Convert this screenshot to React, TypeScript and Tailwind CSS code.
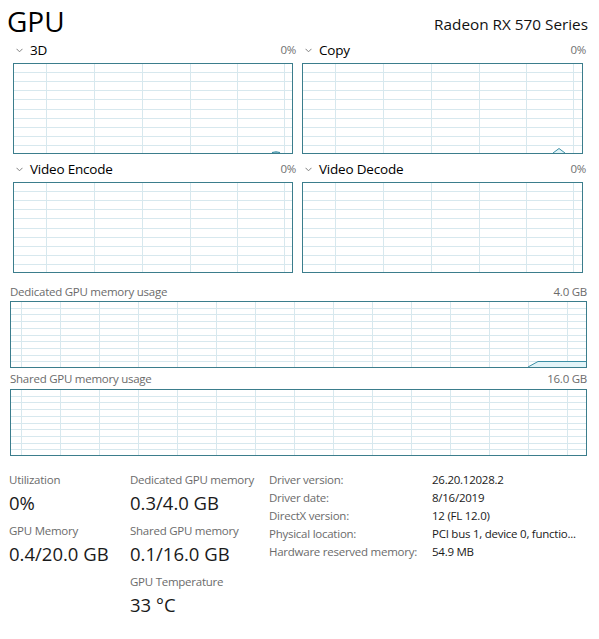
import React from 'react';

const FONT = { fontFamily: '"Open Sans", "Noto Sans", sans-serif' };

type GraphProps = {
  width: number;
  height: number;
  vLines: number[];
  rows: number;
  children?: React.ReactNode;
};

function Graph({ width, height, vLines, rows, children }: GraphProps) {
  const hLines = Array.from({ length: rows - 1 }, (_, i) => ((i + 1) * height) / rows);
  return (
    <div className="border border-[#3b7d8c] bg-white" style={{ width, height }}>
      <svg width={width - 2} height={height - 2} className="block">
        {hLines.map((y) => (
          <line key={'h' + y} x1={0} x2={width} y1={Math.round(y) - 0.5} y2={Math.round(y) - 0.5} stroke="#d7e8ee" strokeWidth={1} />
        ))}
        {vLines.map((x) => (
          <line key={'v' + x} x1={x - 0.5} x2={x - 0.5} y1={0} y2={height} stroke="#d7e8ee" strokeWidth={1} />
        ))}
        {children}
      </svg>
    </div>
  );
}

function Chevron() {
  return (
    <svg width="7" height="5" viewBox="0 0 7 5" className="ml-[1px] mr-[7px] mt-[1px]">
      <path d="M0.5 0.8 L3.5 3.8 L6.5 0.8" fill="none" stroke="#808080" strokeWidth="1" />
    </svg>
  );
}

function EngineGraph({ title, width, children }: { title: string; width: number; children?: React.ReactNode }) {
  return (
    <div style={{ width }}>
      <div className="flex items-center justify-between h-[20px] pl-[2px] -mr-[3px]">
        <div className="flex items-center text-[13.5px] tracking-[-0.2px] text-black">
          <Chevron />
          <span>{title}</span>
        </div>
        <span className="text-[11.5px] tracking-[-0.3px] text-[#707070]">0%</span>
      </div>
      <div className="mt-[3px]">
        <Graph width={width} height={91} vLines={[33, 81, 129, 177, 224, 271]} rows={10}>
          {children}
        </Graph>
      </div>
    </div>
  );
}

const memLines = [11, 50, 89, 128, 167, 206, 245, 284, 323, 362, 401, 440, 479, 518, 557];

function Stat({ label, value }: { label: string; value: string }) {
  return (
    <div className="mb-[5px]">
      <div className="h-[18px] leading-[18px] text-[11.5px] tracking-[-0.25px] text-[#6b6b6b]">{label}</div>
      <div className="h-[28px] leading-[28px] text-[18.5px] text-[#1a1a1a]">{value}</div>
    </div>
  );
}

export default function App() {
  const details: [string, string][] = [
    ['Driver version:', '26.20.12028.2'],
    ['Driver date:', '8/16/2019'],
    ['DirectX version:', '12 (FL 12.0)'],
    ['Physical location:', 'PCI bus 1, device 0, functio...'],
    ['Hardware reserved memory:', '54.9 MB'],
  ];

  return (
    <div className="w-[599px] h-[639px] bg-white overflow-hidden" style={FONT}>
      <div className="flex items-end justify-between h-[38px] pl-[7px] pr-[11px]">
        <span className="text-[28px] leading-[34px] text-black">GPU</span>
        <span className="text-[15.3px] leading-[24px] text-[#111] mb-[2px]">Radeon RX 570 Series</span>
      </div>

      <div className="grid grid-cols-[280px_281px] gap-x-[9px] gap-y-[5px] pl-[13px] mt-[2px]">
        <EngineGraph title="3D" width={280}>
          <path d="M258 88.5 L262 87.8 L266 88.5" fill="none" stroke="#3b8fa5" strokeWidth="1.2" />
        </EngineGraph>
        <EngineGraph title="Copy" width={281}>
          <path d="M250 89 L256 84.5 L262 89" fill="#e2f4f8" stroke="#3b8fa5" strokeWidth="1" />
        </EngineGraph>
        <EngineGraph title="Video Encode" width={280} />
        <EngineGraph title="Video Decode" width={281} />
      </div>

      <div className="pl-[10px] w-[587px] mt-[10px] text-[11.5px] tracking-[-0.25px] text-[#6b6b6b]">
        <div className="flex justify-between h-[18px] leading-[18px]">
          <span>Dedicated GPU memory usage</span>
          <span>4.0 GB</span>
        </div>
        <Graph width={577} height={67} vLines={memLines} rows={10}>
          <path d="M517 65 L527 59.5 L575 59.5 L575 65 Z" fill="#e2f4f8" stroke="none" />
          <path d="M517 65 L527 59.5 L575 59.5" fill="none" stroke="#3b8fa5" strokeWidth="1" />
        </Graph>
        <div className="flex justify-between h-[20px] leading-[20px] mt-[1px]">
          <span>Shared GPU memory usage</span>
          <span>16.0 GB</span>
        </div>
        <Graph width={577} height={67} vLines={memLines} rows={10} />
      </div>

      <div className="flex mt-[15px] pl-[9px]">
        <div className="w-[121px]">
          <Stat label="Utilization" value="0%" />
          <Stat label="GPU Memory" value="0.4/20.0 GB" />
        </div>
        <div className="w-[139px]">
          <Stat label="Dedicated GPU memory" value="0.3/4.0 GB" />
          <Stat label="Shared GPU memory" value="0.1/16.0 GB" />
          <Stat label="GPU Temperature" value="33 °C" />
        </div>
        <div className="text-[11.5px] tracking-[-0.25px] leading-[18px]">
          {details.map(([k, v]) => (
            <div key={k} className="flex">
              <span className="w-[163px] text-[#6b6b6b]">{k}</span>
              <span className="text-[#1a1a1a]">{v}</span>
            </div>
          ))}
        </div>
      </div>
    </div>
  );
}
